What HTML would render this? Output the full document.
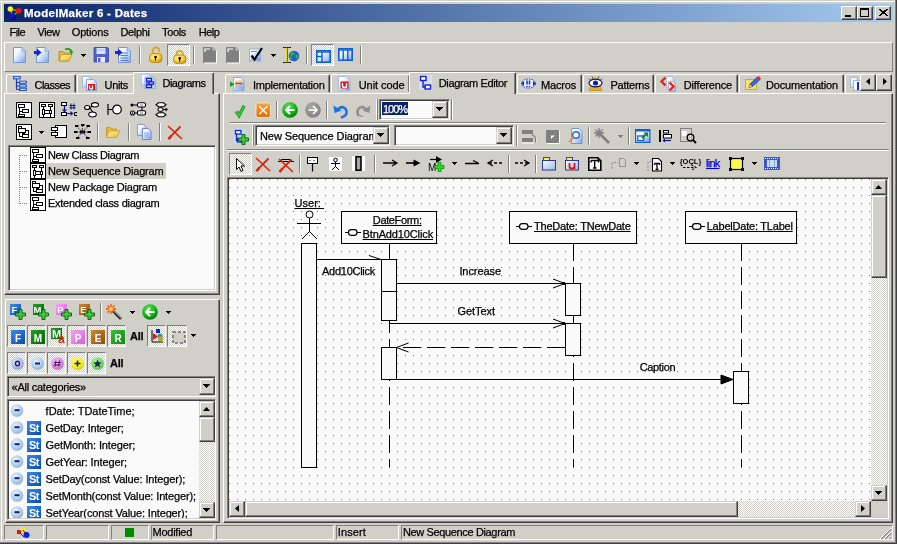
<!DOCTYPE html><html><head><meta charset="utf-8"><title>ModelMaker 6 - Dates</title><style>
*{box-sizing:border-box;margin:0;padding:0}
html,body{width:897px;height:544px;overflow:hidden;background:#d1d0c8}
body{position:relative;font-family:"Liberation Sans",sans-serif;font-size:11px;color:#000;line-height:13px}
#win{position:absolute;left:0;top:0;width:897px;height:544px;will-change:transform}
.a{position:absolute}
.t{position:absolute;white-space:nowrap;height:13px;-webkit-text-stroke:.25px currentColor}
.sunken{border:1px solid;border-color:#808080 #fff #fff #808080;box-shadow:inset 1px 1px 0 #404040,inset -1px -1px 0 #d1d0c8}
.sunk1{border:1px solid;border-color:#808080 #fff #fff #808080}
.rais1{border:1px solid;border-color:#fff #808080 #808080 #fff}
.panel{border:1px solid;border-color:#fff #404040 #404040 #fff;box-shadow:inset -1px -1px 0 #808080}
.btn{background:#d1d0c8;border:1px solid;border-color:#fff #404040 #404040 #fff;box-shadow:inset -1px -1px 0 #808080}
.sbtn{background:#d1d0c8;border:1px solid;border-color:#d1d0c8 #404040 #404040 #d1d0c8;box-shadow:inset -1px -1px 0 #808080,inset 1px 1px 0 #fff}
.down{border:1px solid;border-color:#808080 #fff #fff #808080;background:repeating-conic-gradient(#fff 0% 25%,#d1d0c8 0% 50%) 0 0/2px 2px}
.dith{background:repeating-conic-gradient(#fff 0% 25%,#d1d0c8 0% 50%) 0 0/2px 2px}
.sep{position:absolute;width:2px;border-left:1px solid #808080;border-right:1px solid #fff}
.hl{position:absolute;height:2px;border-top:1px solid #808080;border-bottom:1px solid #fff}
.tab{position:absolute;height:19px;top:74px;border:1px solid;border-color:#fff #404040 transparent #fff;border-radius:2px 2px 0 0;box-shadow:inset -1px 0 0 #808080;background:#d1d0c8}
.tab.act{top:72px;height:22px;border-bottom:0}
.u{text-decoration:underline}
svg{position:absolute;overflow:visible}
</style></head><body><div id="win"><div class="a " style="left:0px;top:1px;width:897px;height:1px;background:#fff"></div>
<div class="a " style="left:1px;top:1px;width:1px;height:541px;background:#fff"></div>
<div class="a " style="left:895px;top:0px;width:1px;height:543px;background:#808080"></div>
<div class="a " style="left:896px;top:0px;width:1px;height:544px;background:#404040"></div>
<div class="a " style="left:0px;top:542px;width:896px;height:1px;background:#808080"></div>
<div class="a " style="left:0px;top:543px;width:897px;height:1px;background:#404040"></div>
<div class="a " style="left:4px;top:4px;width:889px;height:18px;background:linear-gradient(to right,#0a246a,#a6caf0)"></div>
<svg style="left:7px;top:6px" width="16" height="13" viewBox="0 0 16 13" ><path d="M3.500 3L11.500 5M11.500 5L5.500 10.500M3.500 3L5 9" stroke="#b09000" stroke-width="1.300" fill="none"/><circle cx="3.300" cy="3" r="2.700" fill="#f4f420"/><circle cx="11.800" cy="4.800" r="2.800" fill="#f01010"/><rect x="2.500" y="7.500" width="5" height="5" fill="#1010e8"/><path d="M8 8.500v4.500h-4.500" stroke="#000050" fill="none"/></svg>
<div class="t " style="left:24px;top:7px;color:#fff;font-weight:bold;font-size:11.5px;letter-spacing:0.295px">ModelMaker 6 - Dates</div>
<div class="a btn" style="left:841px;top:6px;width:16px;height:14px;"></div>
<div class="a btn" style="left:857px;top:6px;width:16px;height:14px;"></div>
<div class="a btn" style="left:875px;top:6px;width:16px;height:14px;"></div>
<svg style="left:841px;top:6px" width="16" height="14" viewBox="0 0 16 14" ><rect x="4" y="9" width="6" height="2" fill="#000"/></svg>
<svg style="left:857px;top:6px" width="16" height="14" viewBox="0 0 16 14" ><path d="M3 2h9v9h-9z M4 4h7v6h-7z" fill="#000" fill-rule="evenodd"/></svg>
<svg style="left:875px;top:6px" width="16" height="14" viewBox="0 0 16 14" ><path d="M4 3l8 7M5 3l8 7M12 3l-8 7M13 3l-8 7" stroke="#000" stroke-width="1" fill="none" shape-rendering="crispEdges"/></svg>
<div class="t " style="left:9.5px;top:26px;;letter-spacing:-0.559px">File</div>
<div class="t " style="left:37.5px;top:26px;;letter-spacing:-0.414px">View</div>
<div class="t " style="left:71.75px;top:26px;;letter-spacing:-0.167px">Options</div>
<div class="t " style="left:120.5px;top:26px;;letter-spacing:-0.365px">Delphi</div>
<div class="t " style="left:162px;top:26px;;letter-spacing:-0.338px">Tools</div>
<div class="t " style="left:198.75px;top:26px;;letter-spacing:-0.469px">Help</div>
<div class="a rais1" style="left:4px;top:42px;width:889px;height:30px;"></div>
<div class="a sunk1" style="left:4px;top:525px;width:40px;height:15px;"></div>
<div class="a sunk1" style="left:46px;top:525px;width:63px;height:15px;"></div>
<div class="a sunk1" style="left:111px;top:525px;width:38px;height:15px;"></div>
<div class="a sunk1" style="left:151px;top:525px;width:63px;height:15px;"></div>
<div class="a sunk1" style="left:216px;top:525px;width:118px;height:15px;"></div>
<div class="a sunk1" style="left:336px;top:525px;width:63px;height:15px;"></div>
<div class="a sunk1" style="left:401px;top:525px;width:492px;height:15px;"></div>
<div class="t " style="left:152.6px;top:526px;;letter-spacing:-0.272px">Modified</div>
<div class="t " style="left:337.8px;top:526px;;letter-spacing:0.081px">Insert</div>
<div class="t " style="left:403px;top:526px;;letter-spacing:-0.362px">New Sequence Diagram</div>
<div class="a " style="left:125px;top:528px;width:9px;height:9px;background:#008c00"></div>
<svg style="left:17px;top:527px" width="14" height="12" viewBox="0 0 14 12" ><rect x="0" y="3" width="4" height="4" fill="#f01010"/><circle cx="6" cy="2.5" r="2.5" fill="#f0f020"/><circle cx="9.5" cy="8" r="3" fill="#1020e0"/><path d="M3 6l4 4M6 3l3 4" stroke="#000" stroke-width=".8"/></svg>
<svg style="left:880px;top:528px" width="12" height="12" viewBox="0 0 12 12" ><path d="M11 1L1 11M11 5L5 11M11 9L9 11" stroke="#808080" stroke-width="1.4"/><path d="M11 0L0 11M11 4L4 11M11 8L8 11" stroke="#fff" stroke-width="1"/></svg>
<svg width="0" height="0" style="left:0;top:0"><defs>
<linearGradient id="pg" x1="0" y1="0" x2="1" y2="1"><stop offset="0" stop-color="#fff"/><stop offset=".35" stop-color="#f0f6ff"/><stop offset=".7" stop-color="#b0ccf4"/><stop offset="1" stop-color="#70a0e4"/></linearGradient>
<linearGradient id="fold" x1="0" y1="0" x2="1" y2="1"><stop offset="0" stop-color="#fff6a8"/><stop offset="1" stop-color="#e8b830"/></linearGradient>
<radialGradient id="lock" cx=".4" cy=".35" r=".7"><stop offset="0" stop-color="#fff8b0"/><stop offset=".6" stop-color="#f4cc38"/><stop offset="1" stop-color="#c89410"/></radialGradient>
<radialGradient id="gball" cx=".4" cy=".3" r=".75"><stop offset="0" stop-color="#58e858"/><stop offset=".6" stop-color="#18b018"/><stop offset="1" stop-color="#087008"/></radialGradient>
<radialGradient id="grball" cx=".4" cy=".3" r=".75"><stop offset="0" stop-color="#a8a8a8"/><stop offset="1" stop-color="#808080"/></radialGradient>
<linearGradient id="org" x1="0" y1="0" x2="0" y2="1"><stop offset="0" stop-color="#f8a848"/><stop offset="1" stop-color="#e06808"/></linearGradient>
<linearGradient id="bF" x1="0" y1="0" x2="1" y2="1"><stop offset="0" stop-color="#3c8cf0"/><stop offset="1" stop-color="#0848a8"/></linearGradient>
<linearGradient id="bM" x1="0" y1="0" x2="1" y2="1"><stop offset="0" stop-color="#20a020"/><stop offset="1" stop-color="#046404"/></linearGradient>
<linearGradient id="bP" x1="0" y1="0" x2="1" y2="1"><stop offset="0" stop-color="#f8a0f8"/><stop offset="1" stop-color="#d860d8"/></linearGradient>
<linearGradient id="bE" x1="0" y1="0" x2="1" y2="1"><stop offset="0" stop-color="#d08830"/><stop offset="1" stop-color="#904c08"/></linearGradient>
<linearGradient id="bR" x1="0" y1="0" x2="1" y2="1"><stop offset="0" stop-color="#38c038"/><stop offset="1" stop-color="#108810"/></linearGradient>
<radialGradient id="cb" cx=".4" cy=".35" r=".7"><stop offset="0" stop-color="#e8f4ff"/><stop offset=".7" stop-color="#a8c8ec"/><stop offset="1" stop-color="#88a8d0"/></radialGradient>
<radialGradient id="co" cx=".4" cy=".35" r=".7"><stop offset="0" stop-color="#e0e8ff"/><stop offset=".7" stop-color="#a8b8e8"/><stop offset="1" stop-color="#8898d0"/></radialGradient>
<radialGradient id="ch" cx=".4" cy=".35" r=".7"><stop offset="0" stop-color="#ffc0ff"/><stop offset=".7" stop-color="#e080e0"/><stop offset="1" stop-color="#c060c0"/></radialGradient>
<radialGradient id="cy" cx=".4" cy=".35" r=".7"><stop offset="0" stop-color="#ffff80"/><stop offset=".7" stop-color="#f0f010"/><stop offset="1" stop-color="#c8c000"/></radialGradient>
<radialGradient id="cg" cx=".4" cy=".35" r=".7"><stop offset="0" stop-color="#b0f8a0"/><stop offset=".7" stop-color="#70d860"/><stop offset="1" stop-color="#50b040"/></radialGradient>
<linearGradient id="pkg" x1="0" y1="0" x2="1" y2="1"><stop offset="0" stop-color="#fff"/><stop offset="1" stop-color="#98b8e8"/></linearGradient>
</defs></svg>
<svg style="left:13px;top:47px" width="13" height="16" viewBox="0 0 13 16" ><path d="M.5 .5h8.5l3.5 3.5v11.5h-12z" fill="url(#pg)" stroke="#8098c8"/><path d="M9 .5v3.5h3.5" fill="#c8dcf8" stroke="#8098c8" stroke-width=".8"/></svg>
<svg style="left:34px;top:47px" width="16" height="16" viewBox="0 0 16 16" ><g transform="translate(2,0)"><path d="M.5 .5h8.5l3.5 3.5v11.5h-12z" fill="url(#pg)" stroke="#8098c8"/><path d="M9 .5v3.5h3.5" fill="#c8dcf8" stroke="#8098c8" stroke-width=".8"/></g><g transform="translate(0,1)"><path d="M0 3h3v-2.5l4.5 4-4.5 4v-2.5h-3z" fill="#1428e0"/></g></svg>
<svg style="left:58px;top:47px" width="16" height="16" viewBox="0 0 16 16" ><path d="M1 4.5h4l1 1.5h5v8h-10z" fill="#e8b838" stroke="#b88810" stroke-width=".8"/><path d="M1 14l2.5-6.5h10.5l-3 6.5z" fill="url(#fold)" stroke="#c09418" stroke-width=".8"/><path d="M7 2.5c3-1.5 6-.5 6.500 2.500" stroke="#18a018" stroke-width="1.800" fill="none"/><path d="M11 4.500h4.500l-2.200 3.300z" fill="#18a018"/></svg>
<svg style="left:81px;top:54px" width="5" height="3" viewBox="0 0 5 3" ><path d="M0 0h5l-2.5 3z" fill="#000" shape-rendering="crispEdges"/></svg>
<svg style="left:93px;top:47px" width="16" height="16" viewBox="0 0 16 16" ><path d="M1 .5h13.500l1 1v13.500h-14.500z" fill="#5060d0" stroke="#3844a8" stroke-width=".8"/><rect x="3.500" y="1" width="9" height="6" fill="#d8e4f8"/><rect x="4.500" y="2.500" width="7" height="1" fill="#a8b8e0"/><rect x="4" y="10" width="8" height="5.500" fill="#e8ecf8"/><rect x="5" y="11" width="2.500" height="4" fill="#5060d0"/></svg>
<svg style="left:115px;top:47px" width="16" height="16" viewBox="0 0 16 16" ><g transform="translate(3,0)"><path d="M.5 .5h8.5l3.5 3.5v11.5h-12z" fill="url(#pg)" stroke="#8098c8"/><path d="M9 .5v3.5h3.5" fill="#c8dcf8" stroke="#8098c8" stroke-width=".8"/><path d="M2.500 6h7.500M2.500 8.500h7.500M2.500 11h7.500M2.500 13.500h7.500" stroke="#5080d0" stroke-width="1.200"/></g><g transform="translate(0,1)"><path d="M0 3h3v-2.5l4.5 4-4.5 4v-2.5h-3z" fill="#1428e0"/></g></svg>
<div class="sep" style="left:139px;top:46px;height:18px"></div>
<svg style="left:149px;top:47px" width="14" height="16" viewBox="0 0 14 16" ><path d="M3.700 7v-3.300a3.300 3.300 0 0 1 6.600 0v1.300" fill="none" stroke="#d8a818" stroke-width="1.800"/><rect x=".5" y="6.500" width="12.500" height="9" rx="3.500" fill="url(#lock)" stroke="#b88810" stroke-width=".8"/><circle cx="6.500" cy="10" r="1.300" fill="#000"/><rect x="6" y="10" width="1" height="3.500" fill="#000"/></svg>
<div class="a down" style="left:167px;top:44px;width:23px;height:22px;"></div>
<svg style="left:173px;top:50px" width="14" height="14" viewBox="0 0 14 14" ><path d="M3.500 6.500v-2.500a3.200 3.200 0 0 1 6.400 0v2.500" fill="none" stroke="#d8a818" stroke-width="1.800"/><rect x=".5" y="5" width="12.500" height="8.500" rx="3.500" fill="url(#lock)" stroke="#b88810" stroke-width=".8"/><circle cx="6.700" cy="8.300" r="1.300" fill="#000"/><rect x="6.200" y="8.300" width="1" height="3.500" fill="#000"/></svg>
<div class="sep" style="left:193px;top:46px;height:18px"></div>
<svg style="left:203px;top:47px" width="14" height="17" viewBox="0 0 14 17" ><path d="M0 0h10l3 3v13h-13z" fill="#808080"/><path d="M1 16h12.500v-12" stroke="#fff" stroke-width="1" fill="none"/><path d="M2 5v-3h5" stroke="#fff" stroke-width="1.200" fill="none"/><path d="M10 0v3h3" stroke="#d1d0c8" stroke-width="1" fill="none"/></svg>
<svg style="left:226px;top:47px" width="14" height="17" viewBox="0 0 14 17" ><path d="M0 0h10l3 3v13h-13z" fill="#808080"/><path d="M1 16h12.500v-12" stroke="#fff" stroke-width="1" fill="none"/><path d="M2 5v-3h5" stroke="#fff" stroke-width="1.200" fill="none"/><path d="M10 0v3h3" stroke="#d1d0c8" stroke-width="1" fill="none"/></svg>
<svg style="left:248px;top:47px" width="16" height="16" viewBox="0 0 16 16" ><rect x="1.500" y="2" width="11" height="12" fill="url(#pg)" stroke="#88a8d8" stroke-width=".8"/><path d="M3 4.500h6M3 12h8" stroke="#6890d0" stroke-width="1"/><path d="M3.500 8.500l3 4 7.500-11.500" stroke="#000" stroke-width="2.200" fill="none"/></svg>
<svg style="left:271px;top:54px" width="5" height="3" viewBox="0 0 5 3" ><path d="M0 0h5l-2.5 3z" fill="#000" shape-rendering="crispEdges"/></svg>
<svg style="left:283px;top:47px" width="17" height="16" viewBox="0 0 17 16" ><path d="M0 .5h8M0 15.500h8M4 1v14" stroke="#000" stroke-width="1.200" fill="none"/><path d="M3.300 1.500v13" stroke="#e8e020" stroke-width="1.600"/><path d="M1 1.200h6M1 14.800h6" stroke="#e8e020" stroke-width=".8"/><circle cx="11" cy="9" r="5.300" fill="#2858d8"/><path d="M7.500 6c1.500-1.500 3-1 4 0s-.5 2.500-2 2.500-1 2.500 0 3.500-1.500.5-2.500-1M12.500 8.500c1-1 2.500-1 3 0s-1 3-2 3.500-.5-1.500-1-3.500z" fill="#28b828"/></svg>
<div class="sep" style="left:306px;top:46px;height:18px"></div>
<div class="a down" style="left:311px;top:44px;width:23px;height:22px;"></div>
<svg style="left:316px;top:50px" width="15" height="13" viewBox="0 0 15 13" ><rect x=".8" y=".8" width="13.400" height="11.400" fill="url(#pg)" stroke="#1060d0" stroke-width="1.600"/><path d="M.8 2h13.400" stroke="#1060d0" stroke-width="1.400"/><path d="M6 2v10.500M.8 6.500h5.200" stroke="#1060d0" stroke-width="1.400"/></svg>
<svg style="left:338px;top:48px" width="15" height="13" viewBox="0 0 15 13" ><rect x=".8" y=".8" width="13.400" height="11.400" fill="url(#pg)" stroke="#1060d0" stroke-width="1.600"/><path d="M.8 2h13.400" stroke="#1060d0" stroke-width="1.400"/><path d="M5.200 2v10.500M9.800 2v10.500" stroke="#1060d0" stroke-width="1.400"/></svg>
<div class="sep" style="left:360px;top:46px;height:18px"></div>
<div class="a panel" style="left:4px;top:93px;width:216px;height:202px;"></div>
<div class="tab" style="left:6px;width:70px"></div>
<div class="tab" style="left:77px;width:58px"></div>
<div class="tab act" style="left:133px;width:81px"></div>
<svg style="left:13px;top:76px" width="14" height="15" viewBox="0 0 14 15" ><path d="M3.500 3v10.500M3.500 6.500h4M3.500 10h4M3.500 13.500h4" stroke="#1838b0" stroke-width="1.200" fill="none"/><g fill="#4080e0" stroke="#1838b0" stroke-width=".6"><rect x=".5" y=".5" width="7" height="2.500"/><rect x="6.500" y="5" width="7" height="2.500"/><rect x="6.500" y="8.700" width="7" height="2.500"/><rect x="6.500" y="12.200" width="7" height="2.500"/></g><path d="M1.500 1.700h5M7.500 6.200h5M7.500 9.900h5M7.500 13.400h5" stroke="#e8f0ff" stroke-width=".9"/></svg>
<div class="t " style="left:34.5px;top:79px;;letter-spacing:-0.518px">Classes</div>
<svg style="left:82px;top:76px" width="15" height="15" viewBox="0 0 15 15" ><path d="M.5 .5h6l2.500 2.500v8h-8.500z" fill="url(#pg)" stroke="#98b0d8" stroke-width=".8"/><path d="M4.500 3.500h7l3 3v8h-10z" fill="url(#pg)" stroke="#7898d0" stroke-width=".8"/><rect x="6" y="8" width="7" height="6" fill="#e01010"/><path d="M7.500 9.500v2.500q0 1 1.500 1t1.500-1v-2.500v4" stroke="#fff" stroke-width="1.300" fill="none"/></svg>
<div class="t " style="left:104.5px;top:79px;;letter-spacing:-0.312px">Units</div>
<svg style="left:141px;top:74px" width="15" height="15" viewBox="0 0 15 15" ><path d="M.5 .5h7l2 2v9h-9z" fill="url(#pg)" stroke="#a8c0e8" stroke-width=".8"/><path d="M4 3h8.500l2 2v9.500h-10.500z" fill="#b8d0f4" stroke="#88a8e0" stroke-width=".8"/><g fill="#e8f0ff" stroke="#1018d0" stroke-width="1.200"><rect x="5.500" y="4.500" width="5" height="2.500"/><rect x="8" y="8" width="4.500" height="2.200"/><rect x="5.500" y="11" width="5" height="2.500"/></g><path d="M6 7v4M6.500 9h1.500" stroke="#1018d0" stroke-width="1"/></svg>
<div class="t " style="left:162.5px;top:76.5px;;letter-spacing:-0.510px">Diagrams</div>
<svg style="left:16px;top:102px" width="16" height="16" viewBox="0 0 16 16" ><rect x=".5" y=".5" width="15" height="15" fill="#fff" stroke="#000" shape-rendering="crispEdges"/><g stroke="#000" fill="none" shape-rendering="crispEdges"><rect x="2.500" y="2.500" width="6" height="3"/><rect x="6.500" y="7.500" width="6" height="3"/><rect x="2.500" y="12.500" width="6" height="2"/><path d="M3.500 5.500v7M3.500 9.500h3"/></g></svg>
<svg style="left:39px;top:102px" width="16" height="16" viewBox="0 0 16 16" ><rect x=".5" y=".5" width="15" height="15" fill="#fff" stroke="#000" shape-rendering="crispEdges"/><g stroke="#000" fill="none" shape-rendering="crispEdges"><rect x="2.500" y="2.500" width="4" height="2"/><rect x="9.500" y="2.500" width="4" height="2"/><rect x="3.500" y="7.500" width="2" height="5"/><rect x="10.500" y="8.500" width="2" height="3"/><path d="M4.500 4.500v3M11.500 4.500v4M5.500 8.500h5M5.500 11.500h5M4.500 12.500v2M11.500 11.500v3"/></g></svg>
<svg style="left:61px;top:102px" width="17" height="16" viewBox="0 0 17 16" ><g stroke="#000" fill="none" shape-rendering="crispEdges"><rect x=".5" y=".5" width="5" height="3" fill="#fff"/><rect x=".5" y="10.500" width="5" height="3" fill="#fff"/></g><path d="M3.500 4v4.500M6 11.500h4" stroke="#1010a0" stroke-width="1.200"/><path d="M1 7.500h5l-2.500 3z M9.500 9v5l3-2.500z" fill="#1010a0"/><path d="M10 1.500v6M13 1.500v6M8.500 3.500h6M8.500 5.800h6" stroke="#1010a0" stroke-width="1"/><path d="M16 10.500h-2.500v3h2.500" stroke="#000" fill="none"/><path d="M6 11.500h3" stroke="#1010a0" stroke-dasharray="1 1"/></svg>
<svg style="left:84px;top:102px" width="16" height="16" viewBox="0 0 16 16" ><g fill="#fff" stroke="#000" stroke-width="1.100"><path d="M6 5.500l4.500-2.500M6 6l3.500 5.500"/><ellipse cx="11" cy="2.800" rx="3.500" ry="2.200"/><ellipse cx="3.200" cy="5.500" rx="2.600" ry="2"/><ellipse cx="8.500" cy="12.500" rx="3.800" ry="2.500"/></g></svg>
<svg style="left:107px;top:104px" width="16" height="12" viewBox="0 0 16 12" ><path d="M1 0v11M1 5.500h4" stroke="#000" stroke-width="1.200"/><circle cx="10" cy="5.500" r="4.300" fill="#fff" stroke="#000" stroke-width="1.200"/></svg>
<svg style="left:130px;top:102px" width="17" height="15" viewBox="0 0 17 15" ><g stroke="#000" fill="#fff" stroke-width="1.100"><path d="M2.500 3h5M3 11h4M12 5v4" fill="none"/><rect x="7.500" y=".8" width="8" height="4.200" rx="1.500"/><rect x="7.500" y="8.800" width="8" height="4.200" rx="1.500"/><circle cx="2.500" cy="11" r="2"/></g><circle cx="2" cy="3" r="1.500" fill="#000"/><circle cx="2.500" cy="11" r=".7" fill="#000"/><path d="M10 3h3M10 11h3" stroke="#808080"/></svg>
<svg style="left:155px;top:102px" width="14" height="16" viewBox="0 0 14 16" ><g stroke="#000" fill="#fff" stroke-width="1.100"><path d="M6 5v6M6 7.500h6" fill="none"/><path d="M3.500 .8h5l2.500 2-2.500 2h-5l-2.500-2z"/><path d="M3.500 10.800h5l2.500 2-2.500 2h-5l-2.500-2z"/><rect x="3" y="5.800" width="5" height="3.400" rx="1.500"/></g><path d="M13 7.500l-2.500-2v4z" fill="#000"/></svg>
<svg style="left:16px;top:124px" width="16" height="16" viewBox="0 0 16 16" ><rect x=".5" y=".5" width="15" height="15" fill="#fff" stroke="#000" shape-rendering="crispEdges"/><g stroke="#000" fill="none" shape-rendering="crispEdges"><path d="M2.500 4.500v-2h3v2"/><rect x="2.500" y="4.500" width="7" height="4"/><path d="M6.500 10.500v-1h2v1"/><rect x="6.500" y="10.500" width="6" height="3"/><path d="M9.500 6.500h3v4M3.500 8.500v4h3"/></g></svg>
<svg style="left:39px;top:131px" width="5" height="3" viewBox="0 0 5 3" ><path d="M0 0h5l-2.5 3z" fill="#000" shape-rendering="crispEdges"/></svg>
<svg style="left:51px;top:124px" width="17" height="16" viewBox="0 0 17 16" ><g stroke="#000" fill="none" shape-rendering="crispEdges"><rect x="4.500" y="1.500" width="11" height="12" fill="#fff"/><rect x=".5" y="3.500" width="6" height="3" fill="#fff"/><rect x=".5" y="8.500" width="6" height="3" fill="#fff"/></g></svg>
<svg style="left:74px;top:124px" width="17" height="16" viewBox="0 0 17 16" ><path d="M8.500 8L2 2M8.500 8l6-6M8.500 8h-7M8.500 8h7M8.500 8l-5.500 6M8.500 8l5.500 6M8.500 8v-6" stroke="#000" stroke-width=".8" stroke-dasharray="1.500 1"/><g fill="#000"><rect x="1" y="1" width="3.500" height="2"/><rect x="7" y="0" width="3.500" height="2"/><rect x="12.500" y="1" width="3.500" height="2"/><rect x="0" y="7" width="3.500" height="2"/><rect x="13.500" y="7" width="3.500" height="2"/><rect x="2" y="13" width="3.500" height="2"/><rect x="12" y="13" width="3.500" height="2"/><rect x="6" y="6.500" width="5" height="3"/></g><rect x="7" y="7.500" width="3" height="1" fill="#2020f0"/></svg>
<div class="sep" style="left:97px;top:123px;height:18px"></div>
<svg style="left:106px;top:125px" width="15" height="14" viewBox="0 0 15 14" ><path d="M.5 2.500h4l1 1.500h5v8h-10z" fill="#e8b838" stroke="#c09418" stroke-width=".8"/><path d="M.5 12.500l2.500-6.500h11l-3.500 6.500z" fill="url(#fold)" stroke="#c8a020" stroke-width=".8"/></svg>
<div class="sep" style="left:128px;top:123px;height:18px"></div>
<svg style="left:137px;top:124px" width="15" height="16" viewBox="0 0 15 16" ><path d="M.5 .5h6l2.500 2.500v8.500h-8.500z" fill="url(#pg)" stroke="#8890c8" stroke-width=".9"/><path d="M5.500 4.500h6l2.500 2.500v8.500h-8.500z" fill="url(#pg)" stroke="#7078c0" stroke-width=".9"/><path d="M7 9h5M7 11h5M7 13h5" stroke="#88a8e0" stroke-width="1"/></svg>
<div class="sep" style="left:159px;top:123px;height:18px"></div>
<svg style="left:167px;top:125px" width="16" height="15" viewBox="0 0 16 15" ><path d="M1 1l14 13" stroke="#e82000" stroke-width="1.600"/><path d="M13.500 1.500l-9 9-3 3.500" stroke="#e82000" stroke-width="1.800"/><path d="M4.500 10.500l-3 3.500" stroke="#e82000" stroke-width="2.600"/></svg>
<div class="a sunken" style="left:8px;top:145px;width:208px;height:146px;background:#fafafa"></div>
<div class="a " style="left:46px;top:163px;width:120px;height:16px;background:#d1d0c8"></div>
<svg style="left:19px;top:147px" width="10" height="64" viewBox="0 0 10 64" ><path d="M.5 8v48.500M.5 8.500h8M.5 24.500h8M.5 40.500h8M.5 56.500h8" stroke="#808080" stroke-dasharray="1 1" fill="none" shape-rendering="crispEdges"/></svg>
<svg style="left:30px;top:147px" width="16" height="16" viewBox="0 0 16 16" ><rect x=".5" y=".5" width="15" height="15" fill="#fff" stroke="#000" shape-rendering="crispEdges"/><g stroke="#000" fill="none" shape-rendering="crispEdges"><rect x="2.500" y="2.500" width="6" height="3"/><rect x="6.500" y="7.500" width="6" height="3"/><rect x="2.500" y="12.500" width="6" height="2"/><path d="M3.500 5.500v7M3.500 9.500h3"/></g></svg>
<svg style="left:30px;top:163px" width="16" height="16" viewBox="0 0 16 16" ><rect x=".5" y=".5" width="15" height="15" fill="#fff" stroke="#000" shape-rendering="crispEdges"/><g stroke="#000" fill="none" shape-rendering="crispEdges"><rect x="2.500" y="2.500" width="4" height="2"/><rect x="9.500" y="2.500" width="4" height="2"/><rect x="3.500" y="7.500" width="2" height="5"/><rect x="10.500" y="8.500" width="2" height="3"/><path d="M4.500 4.500v3M11.500 4.500v4M5.500 8.500h5M5.500 11.500h5M4.500 12.500v2M11.500 11.500v3"/></g></svg>
<svg style="left:30px;top:179px" width="16" height="16" viewBox="0 0 16 16" ><rect x=".5" y=".5" width="15" height="15" fill="#fff" stroke="#000" shape-rendering="crispEdges"/><g stroke="#000" fill="none" shape-rendering="crispEdges"><path d="M2.500 4.500v-2h3v2"/><rect x="2.500" y="4.500" width="7" height="4"/><path d="M6.500 10.500v-1h2v1"/><rect x="6.500" y="10.500" width="6" height="3"/><path d="M9.500 6.500h3v4M3.500 8.500v4h3"/></g></svg>
<svg style="left:30px;top:195px" width="16" height="16" viewBox="0 0 16 16" ><rect x=".5" y=".5" width="15" height="15" fill="#fff" stroke="#000" shape-rendering="crispEdges"/><g stroke="#000" fill="none" shape-rendering="crispEdges"><rect x="2.500" y="2.500" width="6" height="3"/><rect x="6.500" y="7.500" width="6" height="3"/><rect x="2.500" y="12.500" width="6" height="2"/><path d="M3.500 5.500v7M3.500 9.500h3"/></g></svg>
<div class="t " style="left:48px;top:148.5px;;letter-spacing:-0.365px">New Class Diagram</div>
<div class="t " style="left:48px;top:164.5px;;letter-spacing:-0.187px">New Sequence Diagram</div>
<div class="t " style="left:48px;top:180.5px;;letter-spacing:-0.184px">New Package Diagram</div>
<div class="t " style="left:48px;top:196.5px;;letter-spacing:-0.268px">Extended class diagram</div>
<div class="a panel" style="left:5px;top:299px;width:215px;height:224px;"></div>
<svg style="left:10px;top:304px" width="16" height="16" viewBox="0 0 16 16" ><rect x="0" y="0" width="11" height="11" fill="url(#bF)"/><text x="4.5" y="8.5" font-family="Liberation Sans,sans-serif" font-weight="bold" font-size="9.5" fill="#fff" text-anchor="middle">F</text><path d="M9 5.500h3v3.500h3.500v3h-3.500v3.500h-3v-3.500h-3.500v-3h3.500z" fill="#38d038" stroke="#0a5a0a" stroke-width=".9"/></svg>
<svg style="left:33px;top:304px" width="16" height="16" viewBox="0 0 16 16" ><rect x="0" y="0" width="11" height="11" fill="url(#bM)"/><text x="4.5" y="8.5" font-family="Liberation Sans,sans-serif" font-weight="bold" font-size="9.5" fill="#fff" text-anchor="middle">M</text><path d="M9 5.500h3v3.500h3.500v3h-3.500v3.500h-3v-3.500h-3.500v-3h3.500z" fill="#38d038" stroke="#0a5a0a" stroke-width=".9"/></svg>
<svg style="left:56px;top:304px" width="16" height="16" viewBox="0 0 16 16" ><rect x="0" y="0" width="11" height="11" fill="url(#bP)"/><text x="4.5" y="8.5" font-family="Liberation Sans,sans-serif" font-weight="bold" font-size="9.5" fill="#fff" text-anchor="middle">P</text><path d="M9 5.500h3v3.500h3.500v3h-3.500v3.500h-3v-3.500h-3.500v-3h3.500z" fill="#38d038" stroke="#0a5a0a" stroke-width=".9"/></svg>
<svg style="left:79px;top:304px" width="16" height="16" viewBox="0 0 16 16" ><rect x="0" y="0" width="11" height="11" fill="url(#bE)"/><text x="4.5" y="8.5" font-family="Liberation Sans,sans-serif" font-weight="bold" font-size="9.5" fill="#fff" text-anchor="middle">E</text><path d="M9 5.500h3v3.500h3.500v3h-3.500v3.500h-3v-3.500h-3.500v-3h3.500z" fill="#38d038" stroke="#0a5a0a" stroke-width=".9"/></svg>
<div class="sep" style="left:100px;top:303px;height:18px"></div>
<svg style="left:106px;top:304px" width="16" height="16" viewBox="0 0 16 16" ><path d="M6 6l9 9" stroke="#303030" stroke-width="2.600"/><path d="M7 6l8 8" stroke="#b0b0b0" stroke-width=".9"/><path d="M5 0v10M0 5h10M1.500 1.500l7 7M8.500 1.500l-7 7" stroke="#f84010" stroke-width="1.300"/><circle cx="5" cy="5" r="2.600" fill="#f8a010"/><circle cx="5" cy="5" r="1.400" fill="#fff060"/></svg>
<svg style="left:130px;top:311px" width="5" height="3" viewBox="0 0 5 3" ><path d="M0 0h5l-2.5 3z" fill="#000" shape-rendering="crispEdges"/></svg>
<svg style="left:142px;top:304px" width="16" height="16" viewBox="0 0 16 16" ><circle cx="8" cy="8" r="7.800" fill="url(#gball)"/><path d="M12.500 8h-8M8 4l-4 4 4 4" stroke="#fff" stroke-width="2" fill="none"/></svg>
<svg style="left:166px;top:311px" width="5" height="3" viewBox="0 0 5 3" ><path d="M0 0h5l-2.5 3z" fill="#000" shape-rendering="crispEdges"/></svg>
<div class="a down" style="left:7px;top:325px;width:19px;height:22px;"></div>
<svg style="left:11px;top:330px" width="16" height="16" viewBox="0 0 16 16" ><rect x="0" y="0" width="14" height="14" fill="url(#bF)"/><text x="7.0" y="11.5" font-family="Liberation Sans,sans-serif" font-weight="bold" font-size="10" fill="#fff" text-anchor="middle">F</text></svg>
<div class="a down" style="left:27px;top:325px;width:19px;height:22px;"></div>
<svg style="left:31px;top:330px" width="16" height="16" viewBox="0 0 16 16" ><rect x="0" y="0" width="14" height="14" fill="url(#bM)"/><text x="7.0" y="11.5" font-family="Liberation Sans,sans-serif" font-weight="bold" font-size="10" fill="#fff" text-anchor="middle">M</text></svg>
<div class="a down" style="left:47px;top:325px;width:19px;height:22px;"></div>
<div class="a down" style="left:67px;top:325px;width:19px;height:22px;"></div>
<svg style="left:71px;top:330px" width="16" height="16" viewBox="0 0 16 16" ><rect x="0" y="0" width="14" height="14" fill="url(#bP)"/><text x="7.0" y="11.5" font-family="Liberation Sans,sans-serif" font-weight="bold" font-size="10" fill="#fff" text-anchor="middle">P</text></svg>
<div class="a down" style="left:87px;top:325px;width:19px;height:22px;"></div>
<svg style="left:91px;top:330px" width="16" height="16" viewBox="0 0 16 16" ><rect x="0" y="0" width="14" height="14" fill="url(#bE)"/><text x="7.0" y="11.5" font-family="Liberation Sans,sans-serif" font-weight="bold" font-size="10" fill="#fff" text-anchor="middle">E</text></svg>
<div class="a down" style="left:107px;top:325px;width:19px;height:22px;"></div>
<svg style="left:111px;top:330px" width="16" height="16" viewBox="0 0 16 16" ><rect x="0" y="0" width="14" height="14" fill="url(#bR)"/><text x="7.0" y="11.5" font-family="Liberation Sans,sans-serif" font-weight="bold" font-size="10" fill="#fff" text-anchor="middle">R</text></svg>
<svg style="left:51px;top:328px" width="16" height="16" viewBox="0 0 16 16" ><rect x="0" y="0" width="11" height="11" fill="url(#bM)"/><text x="5.500" y="9.500" font-family="Liberation Sans,sans-serif" font-weight="bold" font-size="11" fill="#fff" text-anchor="middle">M</text><text x="7" y="15" font-family="Liberation Sans,sans-serif" font-weight="bold" font-size="12" fill="#f02000">a</text></svg>
<div class="t " style="left:130px;top:329.5px;font-weight:bold;letter-spacing:-0.188px">All</div>
<div class="a down" style="left:147px;top:325px;width:19px;height:22px;"></div>
<svg style="left:151px;top:329px" width="14" height="14" viewBox="0 0 14 14" ><path d="M1 1v12h11" stroke="#000" fill="none"/><rect x="5" y="0" width="4" height="4" fill="#1020e0"/><path d="M2 4l5 3.500-5 3.500z" fill="#f01010"/><circle cx="9" cy="7" r="2.500" fill="#20a0a0"/><rect x="7.500" y="7.500" width="4.500" height="4.500" fill="#c0a020" transform="rotate(20 9.500 9.500)"/></svg>
<div class="a down" style="left:167px;top:325px;width:20px;height:22px;"></div>
<svg style="left:172px;top:331px" width="14" height="13" viewBox="0 0 14 13" ><rect x="1" y="1" width="12" height="11" fill="#d1d0c8" stroke="#707070" stroke-width="1.600" stroke-dasharray="3 2"/></svg>
<svg style="left:191px;top:334px" width="5" height="3" viewBox="0 0 5 3" ><path d="M0 0h5l-2.5 3z" fill="#000" shape-rendering="crispEdges"/></svg>
<div class="a down" style="left:7px;top:352px;width:19px;height:22px;"></div>
<svg style="left:11px;top:357px" width="13" height="13" viewBox="0 0 13 13" ><circle cx="6.500" cy="6.500" r="6.300" fill="url(#co)"/><ellipse cx="6.500" cy="6.500" rx="2" ry="2.200" fill="none" stroke="#202060" stroke-width="1.400"/></svg>
<div class="a down" style="left:27px;top:352px;width:19px;height:22px;"></div>
<svg style="left:31px;top:357px" width="13" height="13" viewBox="0 0 13 13" ><circle cx="6.500" cy="6.500" r="6.300" fill="url(#cb)"/><rect x="4" y="5.500" width="5" height="2" fill="#202060"/></svg>
<div class="a down" style="left:47px;top:352px;width:19px;height:22px;"></div>
<svg style="left:51px;top:357px" width="13" height="13" viewBox="0 0 13 13" ><circle cx="6.500" cy="6.500" r="6.300" fill="url(#ch)"/><path d="M5 3.500l-1 6M8.500 3.500l-1 6M3 5.500h7M2.500 8h7" stroke="#402060" stroke-width="1"/></svg>
<div class="a down" style="left:67px;top:352px;width:19px;height:22px;"></div>
<svg style="left:71px;top:357px" width="13" height="13" viewBox="0 0 13 13" ><circle cx="6.500" cy="6.500" r="6.300" fill="url(#cy)"/><path d="M6.500 3.500v6M3.500 6.500h6" stroke="#202060" stroke-width="1.600"/></svg>
<div class="a down" style="left:87px;top:352px;width:19px;height:22px;"></div>
<svg style="left:91px;top:357px" width="13" height="13" viewBox="0 0 13 13" ><circle cx="6.500" cy="6.500" r="6.300" fill="url(#cg)"/><path d="M6.500 2.500l1.200 2.800 3 .2-2.300 2 .8 3-2.700-1.700-2.700 1.700.8-3-2.300-2 3-.2z" fill="#202060"/></svg>
<div class="t " style="left:110px;top:356.5px;font-weight:bold;letter-spacing:-0.188px">All</div>
<div class="a sunken" style="left:7px;top:376px;width:209px;height:21px;background:#d1d0c8"></div>
<div class="t " style="left:11.5px;top:381px;;letter-spacing:-0.236px">&laquo;All categories&raquo;</div>
<div class="a sbtn" style="left:199px;top:378px;width:16px;height:17px;"></div>
<svg style="left:203px;top:384px" width="7" height="4" viewBox="0 0 7 4" ><path d="M0 0h7l-3.5 4z" fill="#000" shape-rendering="crispEdges"/></svg>
<div class="a sunken" style="left:7px;top:399px;width:209px;height:121px;background:#fafafa"></div>
<div class="a" style="left:9px;top:401px;width:190px;height:117px;overflow:hidden">
<svg style="left:1px;top:3.0px" width="14" height="13" viewBox="0 0 14 13"><circle cx="7" cy="6.500" r="6.300" fill="url(#cb)"/><rect x="4.500" y="5.200" width="5" height="2" fill="#202060"/></svg>
<div class="t " style="left:36.6px;top:4.0px;;letter-spacing:-0.016px">fDate: TDateTime;</div>
<svg style="left:1px;top:20.0px" width="14" height="13" viewBox="0 0 14 13"><circle cx="7" cy="6.500" r="6.300" fill="url(#cb)"/><rect x="4.500" y="5.200" width="5" height="2" fill="#202060"/></svg>
<svg style="left:18px;top:19.5px" width="14" height="14" viewBox="0 0 14 14"><rect width="14" height="14" fill="url(#bF)"/><text x="7" y="11" font-family="Liberation Sans,sans-serif" font-weight="bold" font-size="11" fill="#fff" text-anchor="middle" letter-spacing="-.5">St</text></svg>
<div class="t " style="left:36.6px;top:21.0px;;letter-spacing:-0.170px">GetDay: Integer;</div>
<svg style="left:1px;top:37.0px" width="14" height="13" viewBox="0 0 14 13"><circle cx="7" cy="6.500" r="6.300" fill="url(#cb)"/><rect x="4.500" y="5.200" width="5" height="2" fill="#202060"/></svg>
<svg style="left:18px;top:36.5px" width="14" height="14" viewBox="0 0 14 14"><rect width="14" height="14" fill="url(#bF)"/><text x="7" y="11" font-family="Liberation Sans,sans-serif" font-weight="bold" font-size="11" fill="#fff" text-anchor="middle" letter-spacing="-.5">St</text></svg>
<div class="t " style="left:36.6px;top:38.0px;;letter-spacing:-0.112px">GetMonth: Integer;</div>
<svg style="left:1px;top:54.0px" width="14" height="13" viewBox="0 0 14 13"><circle cx="7" cy="6.500" r="6.300" fill="url(#cb)"/><rect x="4.500" y="5.200" width="5" height="2" fill="#202060"/></svg>
<svg style="left:18px;top:53.5px" width="14" height="14" viewBox="0 0 14 14"><rect width="14" height="14" fill="url(#bF)"/><text x="7" y="11" font-family="Liberation Sans,sans-serif" font-weight="bold" font-size="11" fill="#fff" text-anchor="middle" letter-spacing="-.5">St</text></svg>
<div class="t " style="left:36.6px;top:55.0px;;letter-spacing:-0.122px">GetYear: Integer;</div>
<svg style="left:1px;top:71.0px" width="14" height="13" viewBox="0 0 14 13"><circle cx="7" cy="6.500" r="6.300" fill="url(#cb)"/><rect x="4.500" y="5.200" width="5" height="2" fill="#202060"/></svg>
<svg style="left:18px;top:70.5px" width="14" height="14" viewBox="0 0 14 14"><rect width="14" height="14" fill="url(#bF)"/><text x="7" y="11" font-family="Liberation Sans,sans-serif" font-weight="bold" font-size="11" fill="#fff" text-anchor="middle" letter-spacing="-.5">St</text></svg>
<div class="t " style="left:36.6px;top:72.0px;;letter-spacing:-0.134px">SetDay(const Value: Integer);</div>
<svg style="left:1px;top:88.0px" width="14" height="13" viewBox="0 0 14 13"><circle cx="7" cy="6.500" r="6.300" fill="url(#cb)"/><rect x="4.500" y="5.200" width="5" height="2" fill="#202060"/></svg>
<svg style="left:18px;top:87.5px" width="14" height="14" viewBox="0 0 14 14"><rect width="14" height="14" fill="url(#bF)"/><text x="7" y="11" font-family="Liberation Sans,sans-serif" font-weight="bold" font-size="11" fill="#fff" text-anchor="middle" letter-spacing="-.5">St</text></svg>
<div class="t " style="left:36.6px;top:89.0px;;letter-spacing:-0.132px">SetMonth(const Value: Integer);</div>
<svg style="left:1px;top:105.0px" width="14" height="13" viewBox="0 0 14 13"><circle cx="7" cy="6.500" r="6.300" fill="url(#cb)"/><rect x="4.500" y="5.200" width="5" height="2" fill="#202060"/></svg>
<svg style="left:18px;top:104.5px" width="14" height="14" viewBox="0 0 14 14"><rect width="14" height="14" fill="url(#bF)"/><text x="7" y="11" font-family="Liberation Sans,sans-serif" font-weight="bold" font-size="11" fill="#fff" text-anchor="middle" letter-spacing="-.5">St</text></svg>
<div class="t " style="left:36.6px;top:106.0px;;letter-spacing:-0.139px">SetYear(const Value: Integer);</div>
</div>
<div class="a dith" style="left:199px;top:401px;width:16px;height:117px;"></div>
<div class="a sbtn" style="left:199px;top:401px;width:16px;height:16px;"></div>
<svg style="left:203px;top:407px" width="7" height="4" viewBox="0 0 7 4" ><path d="M0 4h7l-3.500-4z" fill="#000"/></svg>
<div class="a sbtn" style="left:199px;top:417px;width:16px;height:25px;"></div>
<div class="a sbtn" style="left:199px;top:502px;width:16px;height:16px;"></div>
<svg style="left:203px;top:508px" width="7" height="4" viewBox="0 0 7 4" ><path d="M0 0h7l-3.5 4z" fill="#000" shape-rendering="crispEdges"/></svg>
<div class="a panel" style="left:223px;top:93px;width:670px;height:430px;"></div>
<div class="tab" style="left:225px;width:105px"></div>
<div class="tab" style="left:331px;width:79px"></div>
<div class="tab" style="left:517px;width:65px"></div>
<div class="tab" style="left:583px;width:71px"></div>
<div class="tab" style="left:655px;width:83px"></div>
<div class="tab" style="left:739px;width:105px"></div>
<div class="tab" style="left:845px;width:15px;border-right:0;box-shadow:none;border-radius:2px 0 0 0"></div>
<div class="tab act" style="left:409px;width:107px"></div>
<svg style="left:230px;top:77px" width="15" height="14" viewBox="0 0 15 14" ><path d="M3.500 .5h7.500l3 3v10h-10.500z" fill="url(#pg)" stroke="#88a0d0" stroke-width=".8"/><path d="M5 4.500h7.500" stroke="#f0e020" stroke-width="1.600"/><path d="M5 6.500h7.500" stroke="#f03010" stroke-width="1.600"/><path d="M5 9h7.500M5 11h7.500" stroke="#88a8e0" stroke-width="1.200"/><path d="M0 4.500l4.500 2.800-4.500 2.800z" fill="#10a010"/></svg>
<div class="t " style="left:253px;top:79px;;letter-spacing:-0.266px">Implementation</div>
<svg style="left:338px;top:76px" width="13" height="15" viewBox="0 0 13 15" ><path d="M.5 .5h8l3.500 3.500v10.500h-11.500z" fill="url(#pg)" stroke="#98b0d8" stroke-width=".8"/><rect x="2.500" y="5.500" width="8" height="7" fill="#e01010"/><path d="M4.500 7v3q0 1.500 2 1.500t2-1.500v-3v5" stroke="#fff" stroke-width="1.400" fill="none"/></svg>
<div class="t " style="left:358.75px;top:79px;;letter-spacing:-0.082px">Unit code</div>
<svg style="left:419px;top:75px" width="13" height="15" viewBox="0 0 13 15" ><rect x="0" y="0" width="13" height="15" fill="#d8e8ff" opacity=".7"/><g fill="#fff" stroke="#1020e0" stroke-width="1.400"><rect x="1.500" y="1.500" width="5.500" height="4"/><rect x="6" y="10" width="5.500" height="4"/></g><path d="M4 5.500v6.500h2.500" stroke="#1020e0" stroke-width="1.400" fill="none"/></svg>
<div class="t " style="left:438.75px;top:76.5px;;letter-spacing:-0.365px">Diagram Editor</div>
<svg style="left:521px;top:77px" width="15" height="13" viewBox="0 0 15 13" ><ellipse cx="7.500" cy="6.500" rx="7" ry="4.500" fill="#e8f0ff" stroke="#1030c0" stroke-width="1" stroke-dasharray="1.500 1"/><path d="M6 3.500v4M8.500 3.500v4" stroke="#1030c0" stroke-width="1.500"/><path d="M6 9v1M8.500 9v1" stroke="#1030c0" stroke-width="1.500"/><path d="M0 6.500l3-2.500v5zM15 6.500l-3-2.500v5z" fill="#1030c0"/></svg>
<div class="t " style="left:541px;top:79px;;letter-spacing:-0.177px">Macros</div>
<svg style="left:587px;top:75px" width="17" height="16" viewBox="0 0 17 16" ><path d="M2 15.500h13l-2-5h-9z" fill="#e8b020" stroke="#b08010" stroke-width=".6"/><path d="M8.500 0l-5 9h10z" fill="#f0c838"/><ellipse cx="8.500" cy="8" rx="6.500" ry="3.800" fill="#fff" stroke="#101060" stroke-width="1.200"/><circle cx="8.500" cy="8" r="2.600" fill="#1030d0"/><circle cx="8.500" cy="8" r="1" fill="#000"/><path d="M2 3.500l2 2M15 3.500l-2 2M5 1.500l1 2M12 1.500l-1 2" stroke="#303030" stroke-width=".9"/></svg>
<div class="t " style="left:610.5px;top:79px;;letter-spacing:-0.246px">Patterns</div>
<svg style="left:660px;top:76px" width="16" height="16" viewBox="0 0 16 16" ><path d="M6.500 .5h5l3 3v8h-8z" fill="url(#pg)" stroke="#98b0d8" stroke-width=".7"/><path d="M8.500 5.500h5l2 2.500v7.500h-7z" fill="url(#pg)" stroke="#88a0d8" stroke-width=".7"/><path d="M5.500 1.500l-4 4 4 4" stroke="#f02010" stroke-width="2.400" fill="none"/><path d="M9.500 6.500l4 4-4 4" stroke="#f02010" stroke-width="2.400" fill="none"/></svg>
<div class="t " style="left:683.75px;top:79px;;letter-spacing:-0.169px">Difference</div>
<svg style="left:745px;top:76px" width="16" height="15" viewBox="0 0 16 15" ><rect x=".5" y="3.500" width="11" height="10" fill="#f8e070" stroke="#c0a020" stroke-width=".8"/><path d="M4 11.500l1-3.500 7.500-7 2.500 2.500-7.500 7z" fill="#3868e0" stroke="#183090" stroke-width=".7"/><path d="M12 1.500l1.500-1.500 2.500 2.500-1.500 1.500z" fill="#f02020"/><path d="M4 11.500l1-3 2 2z" fill="#f8d8a0"/></svg>
<div class="t " style="left:766px;top:79px;;letter-spacing:-0.154px">Documentation</div>
<svg style="left:850px;top:77px" width="10" height="14" viewBox="0 0 10 14" ><path d="M.5 .5h7v10h-7z" fill="url(#pg)" stroke="#98b0d8" stroke-width=".8"/><path d="M3.500 3.500h7v10h-7z" fill="#fff" stroke="#88a0d8" stroke-width=".8"/><rect x="7" y="5" width="2" height="8" fill="#2020f0"/></svg>
<div class="a btn" style="left:860px;top:74px;width:16px;height:17px;"></div>
<div class="a btn" style="left:876px;top:74px;width:16px;height:17px;"></div>
<svg style="left:866px;top:78px" width="4" height="7" viewBox="0 0 4 7" ><path d="M4 0v7l-4-3.500z" fill="#000"/></svg>
<svg style="left:883px;top:78px" width="4" height="7" viewBox="0 0 4 7" ><path d="M0 0v7l4-3.500z" fill="#000"/></svg>
<svg style="left:234px;top:103px" width="13" height="15" viewBox="0 0 13 15" ><path d="M2.300 8.300l2.700 4.200 5.200-9.700" stroke="#108a10" stroke-width="3.300" fill="none"/><path d="M2.300 8.300l2.700 4.200 5.200-9.700" stroke="#34c834" stroke-width="2" fill="none"/></svg>
<svg style="left:255px;top:102px" width="16" height="16" viewBox="0 0 16 16" ><rect x="1" y=".8" width="14.400" height="14.600" rx="1.800" fill="url(#org)" stroke="#fbe4c8" stroke-width="1"/><path d="M4.200 4.200l8 8M12.200 4.200l-8 8" stroke="#fff" stroke-width="1.300"/></svg>
<div class="sep" style="left:276px;top:101px;height:18px"></div>
<svg style="left:282px;top:102px" width="16" height="16" viewBox="0 0 16 16" ><circle cx="8" cy="8" r="7.800" fill="url(#gball)"/><path d="M12.500 8h-8M8 4l-4 4 4 4" stroke="#fff" stroke-width="2" fill="none"/></svg>
<svg style="left:305px;top:102px" width="16" height="16" viewBox="0 0 16 16" ><circle cx="8" cy="8" r="7.800" fill="url(#grball)"/><path d="M3.500 8h8M8 4l4 4-4 4" stroke="#fff" stroke-width="1.600" fill="none"/></svg>
<div class="sep" style="left:326px;top:101px;height:18px"></div>
<svg style="left:333px;top:104px" width="16" height="14" viewBox="0 0 16 14" ><path d="M8 13.500c4-1 6-3.500 5.500-6.500s-4-5-7-3l-2 2" stroke="#2070e0" stroke-width="2.600" fill="none"/><path d="M.5 1.500l1 7.500 7-2.500z" fill="#2070e0"/></svg>
<svg style="left:355px;top:104px" width="16" height="14" viewBox="0 0 16 14" ><path d="M8 13.500c-4-1-6-3.500-5.500-6.500s4-5 7-3l2 2" stroke="#909090" stroke-width="2.600" fill="none"/><path d="M15.500 1.500l-1 7.500-7-2.500z" fill="#909090"/><path d="M8.500 14.500c-2-.5-3.500-1.500-4.500-2.500" stroke="#fff" stroke-width="1" fill="none"/></svg>
<div class="sep" style="left:376px;top:99px;height:21px;border-left-color:#fff;border-right-color:#808080"></div>
<div class="a sunken" style="left:379px;top:99px;width:71px;height:21px;background:#fafafa"></div>
<div class="a " style="left:382px;top:102px;width:26px;height:13px;background:#0a246a"></div>
<div class="t " style="left:383px;top:102.5px;color:#fff;letter-spacing:-1.035px">100%</div>
<div class="a sbtn" style="left:432px;top:101px;width:16px;height:17px;"></div>
<svg style="left:436px;top:107px" width="7" height="4" viewBox="0 0 7 4" ><path d="M0 0h7l-3.5 4z" fill="#000" shape-rendering="crispEdges"/></svg>
<div class="sep" style="left:451px;top:99px;height:21px"></div>
<div class="hl" style="left:230px;top:122px;width:656px"></div>
<svg style="left:233px;top:128px" width="16" height="17" viewBox="0 0 16 17" ><rect x=".5" y=".5" width="12" height="15.500" fill="#c4d8f6"/><g fill="#fff" stroke="#1020e0" stroke-width="1.300"><rect x="2.500" y="2.500" width="5.500" height="3.500"/><rect x="4.500" y="10.500" width="4" height="3.500"/></g><path d="M3.500 6v6.500h1.500" stroke="#1020e0" stroke-width="1.300" fill="none"/><path d="M9 6.500h3v3.500h3.500v3h-3.500v3.500h-3v-3.500h-3.500v-3h3.500z" fill="#38d038" stroke="#0a5a0a" stroke-width=".9"/></svg>
<div class="sep" style="left:252px;top:125px;height:21px;border-left-color:#fff;border-right-color:#808080"></div>
<div class="a sunken" style="left:255px;top:125px;width:135px;height:21px;background:#fafafa"></div>
<div class="a" style="left:257px;top:127px;width:116px;height:17px;overflow:hidden">
<div class="t " style="left:3px;top:2.5px;;letter-spacing:-0.087px">New Sequence Diagram</div>
</div>
<div class="a sbtn" style="left:373px;top:127px;width:16px;height:17px;"></div>
<svg style="left:377px;top:133px" width="7" height="4" viewBox="0 0 7 4" ><path d="M0 0h7l-3.5 4z" fill="#000" shape-rendering="crispEdges"/></svg>
<div class="a sunken" style="left:394px;top:125px;width:120px;height:21px;background:#fafafa"></div>
<div class="a sbtn" style="left:496px;top:127px;width:16px;height:17px;"></div>
<svg style="left:500px;top:133px" width="7" height="4" viewBox="0 0 7 4" ><path d="M0 0h7l-3.5 4z" fill="#000" shape-rendering="crispEdges"/></svg>
<div class="sep" style="left:516px;top:125px;height:21px"></div>
<svg style="left:521px;top:130px" width="16" height="14" viewBox="0 0 16 14" ><rect x="1" y="0" width="11" height="4" fill="#808080"/><rect x="1" y="8" width="11" height="4" fill="#808080"/><path d="M1 13h12M12 5.500l3 2.500v5" stroke="#fff" stroke-width="1" fill="none"/><path d="M11 4.500l3.500 3v5" stroke="#808080" stroke-width="1.200" fill="none"/></svg>
<svg style="left:546px;top:130px" width="14" height="14" viewBox="0 0 14 14" ><rect x="0" y="0" width="13" height="13" fill="#808080"/><path d="M.5 13.500h13v-13" stroke="#fff" fill="none"/><path d="M5 9v-3.500h4z" fill="#fff"/></svg>
<svg style="left:568px;top:128px" width="15" height="16" viewBox="0 0 15 16" ><path d="M3.500 .5h7.500l3 3v12h-10.500z" fill="url(#pg)" stroke="#6890d8" stroke-width=".9"/><circle cx="8" cy="7" r="3.300" fill="#fff" fill-opacity=".7" stroke="#3060c0" stroke-width="1.400"/><path d="M5.500 9.500l-4.500 4.500" stroke="#f09020" stroke-width="1.800"/></svg>
<div class="sep" style="left:588px;top:127px;height:18px"></div>
<svg style="left:594px;top:128px" width="16" height="16" viewBox="0 0 16 16" ><path d="M6 6l9 9" stroke="#808080" stroke-width="2.600"/><path d="M5 0v10M0 5h10M1.500 1.500l7 7M8.500 1.500l-7 7" stroke="#808080" stroke-width="1.300"/><circle cx="5" cy="5" r="2.600" fill="#808080"/><circle cx="5" cy="5" r="1.400" fill="#808080"/></svg>
<svg style="left:618px;top:135px" width="5" height="3" viewBox="0 0 5 3" ><path d="M0 0h5l-2.5 3z" fill="#808080" shape-rendering="crispEdges"/></svg>
<div class="sep" style="left:628px;top:127px;height:18px"></div>
<svg style="left:635px;top:129px" width="16" height="14" viewBox="0 0 16 14" ><rect x=".6" y=".6" width="14.300" height="12.800" fill="url(#pg)" stroke="#1060d0" stroke-width="1.200"/><rect x=".5" y="0" width="14.500" height="2.500" fill="#1060d0"/><rect x="2.800" y="7" width="6" height="4.500" fill="#fff" stroke="#1060d0" stroke-width="1.300"/><path d="M7 9l5-4.500" stroke="#108020" stroke-width="1.800"/><path d="M8.500 3.500h4.500v4.500z" fill="#108020"/></svg>
<svg style="left:659px;top:130px" width="13" height="13" viewBox="0 0 13 13" ><path d="M1 0v12" stroke="#000" stroke-width="2"/><rect x="4.500" y=".5" width="5" height="2.500" fill="#fff" stroke="#000"/><rect x="4.500" y="4.500" width="8" height="3.500" fill="#fff" stroke="#000"/><path d="M5 10.500h7" stroke="#1010a0" stroke-width="1.200"/><path d="M3.500 10.500l2.500-2v4z" fill="#1010a0"/></svg>
<svg style="left:680px;top:128px" width="17" height="16" viewBox="0 0 17 16" ><rect x=".5" y=".5" width="11" height="13" fill="#d1d0c8" stroke="#808080"/><rect x="2" y="3" width="4.500" height="5" fill="#fff"/><circle cx="10.500" cy="9.500" r="3.300" fill="#d1d0c8" fill-opacity=".5" stroke="#000" stroke-width="1.300"/><path d="M13 12l3 3" stroke="#000" stroke-width="2"/></svg>
<div class="hl" style="left:227px;top:149px;width:662px"></div>
<div class="a down" style="left:229px;top:153px;width:23px;height:22px;"></div>
<svg style="left:236px;top:158px" width="11" height="14" viewBox="0 0 11 14" ><path d="M.5 .5v11l2.500-2.500 2 4.500 2-1-2-4.500h3.500z" fill="#fff" stroke="#000" stroke-width="1"/></svg>
<svg style="left:255px;top:157px" width="16" height="15" viewBox="0 0 16 15" ><path d="M1 1l14 13" stroke="#e82000" stroke-width="1.600"/><path d="M13.500 1.500l-9 9-3 3.500" stroke="#e82000" stroke-width="1.800"/><path d="M4.500 10.500l-3 3.500" stroke="#e82000" stroke-width="2.600"/></svg>
<svg style="left:278px;top:156px" width="17" height="16" viewBox="0 0 17 16" ><path d="M0 5.500h16M4 3.500h8l2 2M4 3.500l-2 2" stroke="#000" stroke-width="1.100" fill="none"/><path d="M11 6.500l3-1-3-1z" fill="#000"/></svg>
<svg style="left:278px;top:158px" width="16" height="15" viewBox="0 0 16 15" ><path d="M1 1l14 13" stroke="#e82000" stroke-width="1.600"/><path d="M13.500 1.500l-9 9-3 3.500" stroke="#e82000" stroke-width="1.800"/><path d="M4.500 10.500l-3 3.500" stroke="#e82000" stroke-width="2.600"/></svg>
<div class="sep" style="left:299px;top:155px;height:18px"></div>
<svg style="left:307px;top:157px" width="12" height="15" viewBox="0 0 12 15" ><rect x=".5" y=".5" width="10" height="6" fill="#fff" stroke="#000"/><path d="M5.500 6.500v8" stroke="#000" stroke-width="1.200"/><path d="M2.500 3.500h2M6.500 3.500h2" stroke="#000" stroke-dasharray="1 1"/></svg>
<svg style="left:329px;top:157px" width="13" height="14" viewBox="0 0 13 14" ><rect width="13" height="14" fill="#fff"/><circle cx="6.500" cy="3" r="1.800" fill="#fff" stroke="#000"/><path d="M6.500 5v4.500M2 6.500h9M6.500 9.500l-3.500 3.500M6.500 9.500l3.500 3.500" stroke="#000" fill="none"/></svg>
<svg style="left:352px;top:156px" width="13" height="15" viewBox="0 0 13 15" ><rect width="13" height="15" fill="#fff"/><rect x="4" y=".8" width="5" height="13.400" fill="#a8a8a8" stroke="#000" stroke-width="1.600"/></svg>
<div class="sep" style="left:374px;top:155px;height:18px"></div>
<svg style="left:383px;top:158px" width="15" height="10" viewBox="0 0 15 10" ><path d="M0 5h14M9 2l5 3-5 3" stroke="#000" stroke-width="1.300" fill="none"/></svg>
<svg style="left:406px;top:158px" width="15" height="10" viewBox="0 0 15 10" ><path d="M0 5h9" stroke="#000" stroke-width="1.600"/><path d="M7.500 1.500l7 3.500-7 3.500z" fill="#000"/></svg>
<svg style="left:428px;top:156px" width="17" height="16" viewBox="0 0 17 16" ><path d="M2 3.500h8" stroke="#000" stroke-width="1.200"/><path d="M8 0l6 3.500-6 3.500z" fill="#000"/><text x="0" y="15" font-family="Liberation Sans,sans-serif" font-size="10" fill="#000">M</text><path d="M10 6.500h3v3h3v3h-3v3h-3v-3h-3v-3h3z" fill="#20e020" stroke="#087808" stroke-width=".7"/></svg>
<svg style="left:452px;top:162px" width="5" height="3" viewBox="0 0 5 3" ><path d="M0 0h5l-2.5 3z" fill="#000" shape-rendering="crispEdges"/></svg>
<svg style="left:465px;top:159px" width="15" height="6" viewBox="0 0 15 6" ><path d="M0 4.500h14M8 1.500l6 3" stroke="#000" stroke-width="1.300" fill="none"/></svg>
<svg style="left:488px;top:158px" width="15" height="10" viewBox="0 0 15 10" ><path d="M14 5h-14" stroke="#000" stroke-width="1.300" stroke-dasharray="3 2" fill="none"/><path d="M5 2l-5 3 5 3" stroke="#000" stroke-width="1.300" fill="none"/></svg>
<div class="sep" style="left:508px;top:155px;height:18px"></div>
<svg style="left:515px;top:158px" width="15" height="10" viewBox="0 0 15 10" ><path d="M0 5h14" stroke="#000" stroke-width="1.300" stroke-dasharray="3 2" fill="none"/><path d="M9 2l5 3-5 3" stroke="#000" stroke-width="1.300" fill="none"/></svg>
<div class="sep" style="left:535px;top:155px;height:18px"></div>
<svg style="left:542px;top:157px" width="14" height="14" viewBox="0 0 14 14" ><rect x="1.500" y=".5" width="6" height="3.500" fill="#f8f060" stroke="#303890" stroke-width=".9"/><rect x=".5" y="3.500" width="13" height="9.500" fill="url(#pkg)" stroke="#303890" stroke-width="1"/></svg>
<svg style="left:565px;top:157px" width="14" height="14" viewBox="0 0 14 14" ><rect x="1.500" y=".5" width="6" height="3.500" fill="#f8f060" stroke="#303890" stroke-width=".9"/><rect x=".5" y="3.500" width="13" height="9.500" fill="url(#pkg)" stroke="#303890" stroke-width="1"/><path d="M4.500 6v3.500q0 2 2.500 2t2.500-2v-3.500v6" stroke="#e01010" stroke-width="1.800" fill="none"/></svg>
<svg style="left:588px;top:157px" width="14" height="14" viewBox="0 0 14 14" ><path d="M.8 .8h9l3 3v9.400h-12z" fill="#fff" stroke="#000" stroke-width="1.600"/><path d="M10 .8v3h3" fill="none" stroke="#000"/><path d="M3 3.500h7.500v2M3 3.500v2M6.700 3.500v7.500M5 11h3.500" stroke="#000" stroke-width="1.400" fill="none"/></svg>
<svg style="left:611px;top:158px" width="16" height="12" viewBox="0 0 16 12" ><path d="M1 11v-6.500h6" stroke="#909090" stroke-width="1.200" stroke-dasharray="2.500 1.500" fill="none"/><path d="M8.500 .5h4l2 2v6h-6z" fill="#d1d0c8" stroke="#909090"/></svg>
<svg style="left:634px;top:162px" width="5" height="3" viewBox="0 0 5 3" ><path d="M0 0h5l-2.5 3z" fill="#000" shape-rendering="crispEdges"/></svg>
<svg style="left:647px;top:158px" width="16" height="14" viewBox="0 0 16 14" ><path d="M1 13v-9.500h5" stroke="#909090" stroke-width="1.100" stroke-dasharray="2 1.500" fill="none"/><path d="M5.500 .5h6l3 3v9.500h-9z" fill="#fff" stroke="#000" stroke-width="1.100"/><path d="M7.500 5.500h5v1.500M7.500 5.500v1.500M10 5.500v6M8.500 11.500h3" stroke="#000" stroke-width="1.300" fill="none"/></svg>
<svg style="left:670px;top:162px" width="5" height="3" viewBox="0 0 5 3" ><path d="M0 0h5l-2.5 3z" fill="#000" shape-rendering="crispEdges"/></svg>
<svg style="left:682px;top:156px" width="17" height="15" viewBox="0 0 17 15" ><text x="8.500" y="7.500" font-family="Liberation Sans,sans-serif" font-size="7.500" font-weight="bold" text-anchor="middle" fill="#000">{OCL}</text><path d="M1 11.500h12M9 8.500l5 3-5 3" stroke="#000" stroke-width="1.100" stroke-dasharray="2.500 1.500" fill="none"/></svg>
<div class="t " style="left:706px;top:157px;color:#0000e0;text-decoration:underline;letter-spacing:-0.754px">link</div>
<svg style="left:729px;top:157px" width="15" height="14" viewBox="0 0 15 14" ><rect x="1.500" y="1.500" width="12" height="11" fill="#f8f850" stroke="#000" stroke-width="1.200"/><g fill="#000"><rect x="0" y="0" width="3" height="3"/><rect x="12" y="0" width="3" height="3"/><rect x="0" y="11" width="3" height="3"/><rect x="12" y="11" width="3" height="3"/></g></svg>
<svg style="left:752px;top:162px" width="5" height="3" viewBox="0 0 5 3" ><path d="M0 0h5l-2.5 3z" fill="#000" shape-rendering="crispEdges"/></svg>
<svg style="left:764px;top:157px" width="16" height="13" viewBox="0 0 16 13" ><rect width="16" height="13" fill="#3858c8"/><rect x="3" y="3" width="10" height="7" fill="#c8dcf8"/><path d="M5.500 3v7M10.500 3v7" stroke="#88a8e0" stroke-width="1"/><path d="M1 1.500h14M1 11.500h14" stroke="#fff" stroke-width="1" stroke-dasharray="1 1"/></svg>
<div class="a sunken" style="left:227px;top:177px;width:662px;height:342px;background:#fafafa"></div>
<svg style="left:229px;top:179px" width="642" height="322" viewBox="229 179 642 322"><defs><pattern id="grid" x="229" y="179" width="8" height="8" patternUnits="userSpaceOnUse"><rect width="1" height="1" fill="#787878"/></pattern></defs><rect x="229" y="179" width="642" height="322" fill="url(#grid)" shape-rendering="crispEdges"/><path d="M389.5 243V467" stroke="#000" stroke-dasharray="18 6" shape-rendering="crispEdges"/><path d="M573.5 243V467" stroke="#000" stroke-dasharray="18 6" shape-rendering="crispEdges"/><path d="M741.5 243V467" stroke="#000" stroke-dasharray="18 6" shape-rendering="crispEdges"/><circle cx="309.500" cy="214.500" r="3.500" fill="#fafafa" stroke="#000"/><path d="M309.500 218v13.500M297 223.500h24M309.500 231.500l-7.500 7.500M309.500 231.500l7.500 7.500" stroke="#000" fill="none"/><rect x="301.500" y="243.500" width="15" height="224" fill="#fafafa" stroke="#000" stroke-width="1"  shape-rendering="crispEdges"/><rect x="341.5" y="211.500" width="95" height="32" fill="#fafafa" stroke="#000" shape-rendering="crispEdges"/><rect x="509.5" y="211.500" width="127" height="32" fill="#fafafa" stroke="#000" shape-rendering="crispEdges"/><rect x="685.5" y="211.500" width="111" height="32" fill="#fafafa" stroke="#000" shape-rendering="crispEdges"/><path d="M345 232.5h4M357 232.5h4" stroke="#000" stroke-width="1.200" fill="none"/><rect x="348.5" y="229.7" width="8.500" height="5.600" rx="2.800" fill="#fafafa" stroke="#000" stroke-width="1.200"/><path d="M516 226.5h4M528 226.5h4" stroke="#000" stroke-width="1.200" fill="none"/><rect x="519.5" y="223.7" width="8.500" height="5.600" rx="2.800" fill="#fafafa" stroke="#000" stroke-width="1.200"/><path d="M689 226.5h4M701 226.5h4" stroke="#000" stroke-width="1.200" fill="none"/><rect x="692.5" y="223.7" width="8.500" height="5.600" rx="2.800" fill="#fafafa" stroke="#000" stroke-width="1.200"/><rect x="381.5" y="259.5" width="15" height="61" fill="#fafafa" stroke="#000" shape-rendering="crispEdges"/><rect x="565.5" y="283.5" width="15" height="32" fill="#fafafa" stroke="#000" shape-rendering="crispEdges"/><rect x="565.5" y="323.5" width="15" height="32" fill="#fafafa" stroke="#000" shape-rendering="crispEdges"/><rect x="381.5" y="347.5" width="15" height="32" fill="#fafafa" stroke="#000" shape-rendering="crispEdges"/><rect x="733.5" y="371.5" width="15" height="32" fill="#fafafa" stroke="#000" shape-rendering="crispEdges"/><path d="M381 291.500h15" stroke="#000" stroke-width="1" fill="none" shape-rendering="crispEdges"/><path d="M317 259.500h64M396 283.500h169M390 323.500h175M396 379.500h337" stroke="#000" stroke-width="1" fill="none" shape-rendering="crispEdges"/><path d="M369 255.500l12 4" stroke="#000" fill="none"/><path d="M553 279l12 4.500-12 4.500M553 319l12 4.500-12 4.500M408.500 343l-12 4.500 12 4.500" stroke="#000" fill="none"/><path d="M565 347.500H396" stroke="#000" stroke-dasharray="18 6" shape-rendering="crispEdges"/><path d="M721 375l12 4.500-12 4.500z" fill="#000" stroke="#000"/><rect x="562" y="282" width="3" height="3" fill="#000"/><rect x="562" y="322" width="3" height="3" fill="#000"/></svg>
<div class="a" style="left:229px;top:179px;width:642px;height:322px;overflow:hidden">
<div class="t " style="left:65.5px;top:18px;text-decoration:underline;white-space:pre;letter-spacing:0.026px">User: </div>
<div class="t " style="left:143.8px;top:35px;text-decoration:underline;white-space:pre;letter-spacing:-0.352px">DateForm:</div>
<div class="t " style="left:133.5px;top:49px;text-decoration:underline;white-space:pre;letter-spacing:-0.127px">BtnAdd10Click</div>
<div class="t " style="left:305px;top:41px;text-decoration:underline;white-space:pre;letter-spacing:-0.205px">TheDate: TNewDate</div>
<div class="t " style="left:477.70000000000005px;top:41px;text-decoration:underline;white-space:pre;letter-spacing:-0.218px">LabelDate: TLabel</div>
<div class="t " style="left:93px;top:85.5px;;letter-spacing:-0.264px">Add10Click</div>
<div class="t " style="left:230.39999999999998px;top:86px;;letter-spacing:-0.075px">Increase</div>
<div class="t " style="left:228.5px;top:126px;;letter-spacing:-0.058px">GetText</div>
<div class="t " style="left:410.70000000000005px;top:182px;;letter-spacing:-0.332px">Caption</div>
</div>
<div class="a dith" style="left:871px;top:179px;width:16px;height:322px;"></div>
<div class="a sbtn" style="left:871px;top:179px;width:16px;height:16px;"></div>
<svg style="left:875px;top:185px" width="7" height="4" viewBox="0 0 7 4" ><path d="M0 4h7l-3.500-4z" fill="#000"/></svg>
<div class="a sbtn" style="left:871px;top:195px;width:16px;height:83px;"></div>
<div class="a sbtn" style="left:871px;top:485px;width:16px;height:16px;"></div>
<svg style="left:875px;top:491px" width="7" height="4" viewBox="0 0 7 4" ><path d="M0 0h7l-3.5 4z" fill="#000" shape-rendering="crispEdges"/></svg>
<div class="a dith" style="left:229px;top:501px;width:642px;height:16px;"></div>
<div class="a sbtn" style="left:229px;top:501px;width:16px;height:16px;"></div>
<svg style="left:235px;top:505px" width="4" height="7" viewBox="0 0 4 7" ><path d="M4 0v7l-4-3.500z" fill="#000"/></svg>
<div class="a sbtn" style="left:245px;top:501px;width:493px;height:16px;"></div>
<div class="a sbtn" style="left:855px;top:501px;width:16px;height:16px;"></div>
<svg style="left:861px;top:505px" width="4" height="7" viewBox="0 0 4 7" ><path d="M0 0v7l4-3.500z" fill="#000"/></svg>
<div class="a " style="left:871px;top:501px;width:16px;height:16px;background:#d1d0c8"></div></div></body></html>
